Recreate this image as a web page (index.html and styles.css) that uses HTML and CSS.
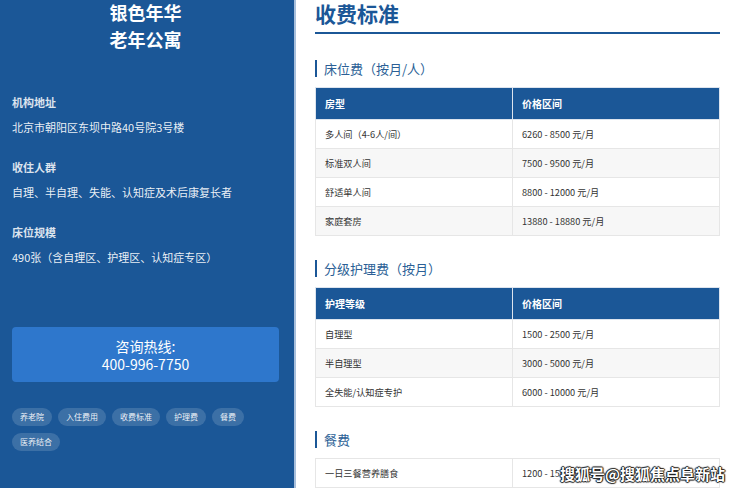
FILE: index.html
```html
<!DOCTYPE html>
<html lang="zh-CN">
<head>
<meta charset="utf-8">
<title>银色年华老年公寓 - 收费标准</title>
<link rel="stylesheet" href="styles.css">
</head>
<body>
<div class="page">
  <aside class="sidebar">
    <div class="brand">银色年华<br>老年公寓</div>
    <div class="info">
      <div class="group">
        <div class="label">机构地址</div>
        <div class="value">北京市朝阳区东坝中路40号院3号楼</div>
      </div>
      <div class="group">
        <div class="label">收住人群</div>
        <div class="value">自理、半自理、失能、认知症及术后康复长者</div>
      </div>
      <div class="group">
        <div class="label">床位规模</div>
        <div class="value">490张（含自理区、护理区、认知症专区）</div>
      </div>
    </div>
    <div class="hotline">咨询热线:<br>400-996-7750</div>
    <div class="tags">
      <span class="tag">养老院</span>
      <span class="tag">入住费用</span>
      <span class="tag">收费标准</span>
      <span class="tag">护理费</span>
      <span class="tag">餐费</span>
      <span class="tag">医养结合</span>
    </div>
  </aside>
  <main class="content">
    <h1 class="title">收费标准</h1>
    <section class="section">
      <h2 class="section-title">床位费（按月/人）</h2>
      <table class="fee-table">
        <colgroup><col class="col-a"><col></colgroup>
        <thead><tr><th>房型</th><th>价格区间</th></tr></thead>
        <tbody>
          <tr><td>多人间（4-6人/间）</td><td>6260 - 8500 元/月</td></tr>
          <tr><td>标准双人间</td><td>7500 - 9500 元/月</td></tr>
          <tr><td>舒适单人间</td><td>8800 - 12000 元/月</td></tr>
          <tr><td>家庭套房</td><td>13880 - 18880 元/月</td></tr>
        </tbody>
      </table>
    </section>
    <section class="section">
      <h2 class="section-title">分级护理费（按月）</h2>
      <table class="fee-table">
        <colgroup><col class="col-a"><col></colgroup>
        <thead><tr><th>护理等级</th><th>价格区间</th></tr></thead>
        <tbody>
          <tr><td>自理型</td><td>1500 - 2500 元/月</td></tr>
          <tr><td>半自理型</td><td>3000 - 5000 元/月</td></tr>
          <tr><td>全失能/认知症专护</td><td>6000 - 10000 元/月</td></tr>
        </tbody>
      </table>
    </section>
    <section class="section">
      <h2 class="section-title">餐费</h2>
      <table class="fee-table">
        <colgroup><col class="col-a"><col></colgroup>
        <tbody>
          <tr><td>一日三餐营养膳食</td><td>1200 - 1500 元/月</td></tr>
          <tr><td>特殊治疗膳食</td><td>1500 - 1800 元/月</td></tr>
        </tbody>
      </table>
    </section>
  </main>
  <div class="watermark">搜狐号@搜狐焦点阜新站</div>
</div>
</body>
</html>
```

FILE: styles.css
```css
* { box-sizing: border-box; }
html, body {
  margin: 0;
  padding: 0;
  height: 488px;
  overflow: hidden;
  background: #fff;
  font-family: "Noto Sans CJK SC", "Noto Sans", sans-serif;
}
.page {
  position: relative;
  display: flex;
  height: 488px;
  overflow: hidden;
}
.sidebar {
  width: 296px;
  flex: none;
  background: #1b5797;
  border-right: 2px solid #a8bfdb;
  padding: 0 15px 0 12px;
  color: #fff;
}
.brand {
  margin-top: -1px;
  text-align: center;
  font-size: 18px;
  font-weight: 700;
  line-height: 27px;
}
.info {
  margin-top: 41px;
  display: flex;
  flex-direction: column;
  gap: 24px;
}
.group {
  display: flex;
  flex-direction: column;
  gap: 9px;
}
.label {
  font-size: 11px;
  font-weight: 700;
  line-height: 16px;
  color: rgba(255, 255, 255, 0.85);
}
.value {
  font-size: 11px;
  line-height: 16px;
  color: rgba(255, 255, 255, 0.92);
}
.hotline {
  margin-top: 62px;
  background: #2e77cc;
  border-radius: 4px;
  padding: 10px 0 9px;
  text-align: center;
  font-size: 14px;
  line-height: 18px;
  color: #fff;
}
.tags {
  margin-top: 26px;
  display: flex;
  flex-wrap: wrap;
  gap: 7px 6px;
}
.tag {
  height: 18px;
  line-height: 18px;
  padding: 0 8px;
  border-radius: 9px;
  background: rgba(255, 255, 255, 0.15);
  font-size: 8px;
  color: rgba(255, 255, 255, 0.92);
}
.content {
  flex: 1;
  padding: 0 20px 0 19px;
}
.title {
  margin: 0;
  font-size: 21px;
  font-weight: 700;
  line-height: 26px;
  padding-bottom: 6px;
  color: #1b5797;
  border-bottom: 2px solid #1b5797;
}
.section { margin-top: 24px; }
.section:first-of-type { margin-top: 26px; }
.section-title {
  margin: 0 0 10px;
  font-size: 13px;
  font-weight: 400;
  line-height: 17px;
  color: #2b5f96;
  border-left: 2px solid #1b5797;
  padding-left: 7px;
}
.fee-table {
  width: 100%;
  border-collapse: collapse;
  table-layout: fixed;
  border: 1px solid #e2e2e2;
}
.col-a { width: 197px; }
.fee-table th {
  height: 32px;
  padding: 0 9px;
  background: #1b5797;
  color: #fff;
  font-size: 10px;
  font-weight: 700;
  text-align: left;
  border: 1px solid #dde4ee;
}
.fee-table td {
  height: 29px;
  padding: 0 9px;
  font-size: 9.2px;
  color: #333;
  border: 1px solid #e6e6e6;
}
.fee-table tbody tr:nth-child(even) td { background: #f7f7f7; }
.watermark {
  position: absolute;
  right: 15px;
  bottom: 4px;
  font-size: 15px;
  font-weight: 700;
  color: #fff;
  text-shadow: 0 0 1px #000, 1px 0 1px #222, -1px 0 1px #222, 0 1px 1px #222, 0 -1px 1px #222;
}
```
